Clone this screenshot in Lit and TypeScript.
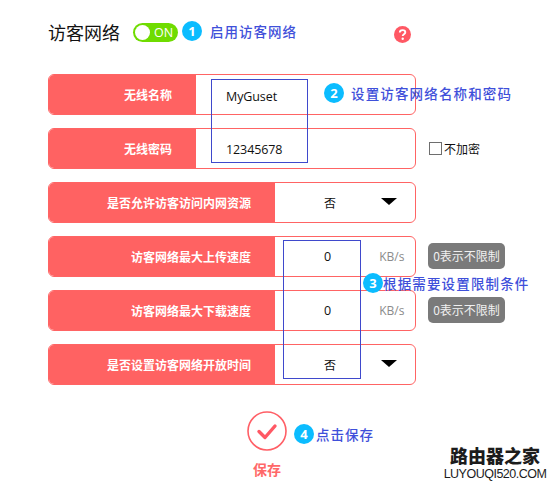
import { LitElement, html, css, nothing } from "lit";
import { customElement } from "lit/decorators.js";

type Row = {
  label: string;
  wide: boolean;
  kind: "text" | "select" | "speed";
  value: string;
  valueCls?: string;
  side?: "check" | "tip";
};

const ROWS: Row[] = [
  { label: "无线名称", wide: false, kind: "text", value: "MyGuset" },
  { label: "无线密码", wide: false, kind: "text", value: "12345678", valueCls: "low", side: "check" },
  { label: "是否允许访客访问内网资源", wide: true, kind: "select", value: "否" },
  { label: "访客网络最大上传速度", wide: true, kind: "speed", value: "0", side: "tip" },
  { label: "访客网络最大下载速度", wide: true, kind: "speed", value: "0", side: "tip" },
  { label: "是否设置访客网络开放时间", wide: true, kind: "select", value: "否" },
];

@customElement("app-root")
export class AppRoot extends LitElement {
  static styles = css`
    :host {
      display: block;
      width: 549px;
      height: 488px;
      position: relative;
      overflow: hidden;
      background: #fff;
      font-family: "Noto Sans CJK SC", "Noto Sans", sans-serif;
      color: #111;
    }
    .page {
      display: flex;
      flex-direction: column;
      padding: 20px 0 0 48px;
    }
    .head {
      display: flex;
      align-items: center;
      height: 24px;
    }
    .title {
      font-size: 18px;
      line-height: 24px;
      width: 85px;
    }
    .toggle {
      width: 45px;
      height: 19px;
      border-radius: 10px;
      background: #6fdc00;
      display: flex;
      align-items: center;
      padding: 2px;
      box-sizing: border-box;
      color: #fff;
      font-family: "Open Sans", sans-serif;
      font-size: 12.5px;
    }
    .knob {
      width: 15px;
      height: 15px;
      border-radius: 50%;
      background: #fff;
      margin-right: 4px;
      flex: none;
    }
    .help {
      margin-left: 216px;
      margin-top: 4px;
      display: block;
    }
    .form {
      display: flex;
      flex-direction: column;
      gap: 13px;
      margin-top: 30px;
    }
    .line {
      display: flex;
      align-items: center;
      gap: 13px;
    }
    .row {
      width: 368px;
      height: 41px;
      box-sizing: border-box;
      border: 1px solid #ff6464;
      border-radius: 6px;
      display: flex;
      overflow: hidden;
      flex: none;
    }
    .label {
      width: 148px;
      flex: none;
      margin: -1px 0 -1px -1px;
      background: #ff6262;
      color: #fff;
      font-size: 12px;
      font-weight: 700;
      display: flex;
      align-items: center;
      justify-content: flex-end;
      padding: 0 24px 0 0;
      box-sizing: border-box;
    }
    .label.wide {
      width: 227px;
    }
    .cell {
      flex: 1;
      display: flex;
      align-items: center;
      font-size: 13px;
      min-width: 0;
    }
    .text {
      padding-left: 30px;
      font-family: "Open Sans", sans-serif;
      letter-spacing: -0.1px;
      font-size: 12.5px;
    }
    .text span { display: block; padding-top: 3px; }
    .text span.low { padding-top: 2px; }
    .select {
      padding-left: 49px;
      font-size: 12px;
    }
    .select span { padding-bottom: 1px; }
    .arrow {
      width: 0;
      height: 0;
      border-left: 8px solid transparent;
      border-right: 8px solid transparent;
      border-top: 7px solid #000;
      margin-left: 45px;
      margin-top: -2px;
    }
    .speed {
      padding-left: 49px;
      font-family: "Open Sans", sans-serif;
      font-size: 12.5px;
    }
    .unit {
      margin-left: 48px;
      color: #8b8b8b;
      font-size: 12px;
    }
    .check {
      display: flex;
      align-items: center;
      font-size: 12px;
      gap: 2px;
    }
    .box {
      width: 11px;
      height: 11px;
      border: 1px solid #6e6e6e;
      display: block;
    }
    .tip {
      width: 77px;
      height: 26px;
      background: #7a7a7a;
      border-radius: 5px;
      color: #f0f0f0;
      font-size: 12px;
      display: flex;
      align-items: center;
      justify-content: center;
      white-space: nowrap;
      margin: -2px 0 0 -1px;
    }
    .save {
      width: 80px;
      margin: 26px 0 0 179px;
      display: flex;
      flex-direction: column;
      align-items: center;
      gap: 8px;
      color: #ff6868;
      font-size: 14px;
      font-weight: 700;
      line-height: 20px;
    }
    .save svg { display: block; }

    .frame {
      position: absolute;
      border: 1px solid #3f49cc;
      box-sizing: border-box;
    }
    .f1 { left: 211px; top: 79px; width: 97px; height: 84px; }
    .f2 { left: 283px; top: 240px; width: 78px; height: 139px; }

    .note {
      position: absolute;
      display: flex;
      align-items: center;
      color: #3f50da;
      font-size: 13.5px;
      font-weight: 500;
      letter-spacing: 1px;
      white-space: nowrap;
      height: 20px;
    }
    .dot {
      width: 20px;
      height: 20px;
      border-radius: 50%;
      background: #0bbcff;
      color: #fff;
      font-family: "Open Sans", sans-serif;
      font-weight: 700;
      font-size: 13px;
      letter-spacing: 0;
      display: flex;
      align-items: center;
      justify-content: center;
      flex: none;
    }
    .n1 { left: 182px; top: 21px; gap: 8px; }
    .n2 { left: 324px; top: 83px; gap: 7px; }
    .n3 { left: 363px; top: 273px; gap: 0; }
    .n4 { left: 294px; top: 424px; gap: 2px; }
    .n2 span:last-child, .n3 span:last-child { letter-spacing: 1.15px; }

    .mark {
      position: absolute;
      left: 447px;
      top: 447px;
      width: 96px;
      display: flex;
      flex-direction: column;
      align-items: center;
      color: #1c1c1c;
    }
    .mark b {
      font-family: "Liberation Sans", "Noto Sans CJK SC", sans-serif;
      font-size: 18px;
      line-height: 21px;
      font-weight: 900;
      white-space: nowrap;
    }
    .mark span {
      font-family: "Liberation Sans", sans-serif;
      font-size: 12.5px;
      line-height: 13px;
      letter-spacing: -0.5px;
      white-space: nowrap;
    }
  `;

  private renderCell(r: Row) {
    if (r.kind === "text") {
      return html`<div class="cell text"><span class=${r.valueCls ?? ""}>${r.value}</span></div>`;
    }
    if (r.kind === "select") {
      return html`<div class="cell select"><span>${r.value}</span><i class="arrow"></i></div>`;
    }
    return html`<div class="cell speed"><span>${r.value}</span><span class="unit">KB/s</span></div>`;
  }

  private renderSide(r: Row) {
    if (r.side === "check") {
      return html`<div class="check"><i class="box"></i><span>不加密</span></div>`;
    }
    if (r.side === "tip") {
      return html`<div class="tip">0表示不限制</div>`;
    }
    return nothing;
  }

  render() {
    return html`
      <div class="page">
        <div class="head">
          <div class="title">访客网络</div>
          <div class="toggle"><i class="knob"></i><span>ON</span></div>
          <svg class="help" width="17" height="17" viewBox="0 0 17 17">
            <circle cx="8.5" cy="8.5" r="8.5" fill="#ff5864" />
            <path d="M5.8 6.6c0-1.6 1.2-2.5 2.8-2.5s2.7.9 2.7 2.2c0 1.9-2.6 1.9-2.6 3.8" fill="none" stroke="#fff" stroke-width="1.9" />
            <circle cx="8.7" cy="12.8" r="1.2" fill="#fff" />
          </svg>
        </div>
        <div class="form">
          ${ROWS.map(
            (r) => html`
              <div class="line">
                <div class="row">
                  <div class="label ${r.wide ? "wide" : ""}">${r.label}</div>
                  ${this.renderCell(r)}
                </div>
                ${this.renderSide(r)}
              </div>
            `
          )}
        </div>
        <div class="save">
          <svg width="40" height="40" viewBox="0 0 40 40">
            <circle cx="20" cy="20" r="19" fill="none" stroke="#ff5f66" stroke-width="1.6" />
            <path d="M12 20.5l6 6L28 15" fill="none" stroke="#ff5864" stroke-width="3.4" stroke-linecap="round" stroke-linejoin="round" />
          </svg>
          <span>保存</span>
        </div>
      </div>

      <div class="frame f1"></div>
      <div class="frame f2"></div>

      <div class="note n1"><span class="dot">1</span><span>启用访客网络</span></div>
      <div class="note n2"><span class="dot">2</span><span>设置访客网络名称和密码</span></div>
      <div class="note n3"><span class="dot">3</span><span>根据需要设置限制条件</span></div>
      <div class="note n4"><span class="dot">4</span><span>点击保存</span></div>

      <div class="mark"><b>路由器之家</b><span>LUYOUQI520.COM</span></div>
    `;
  }
}
